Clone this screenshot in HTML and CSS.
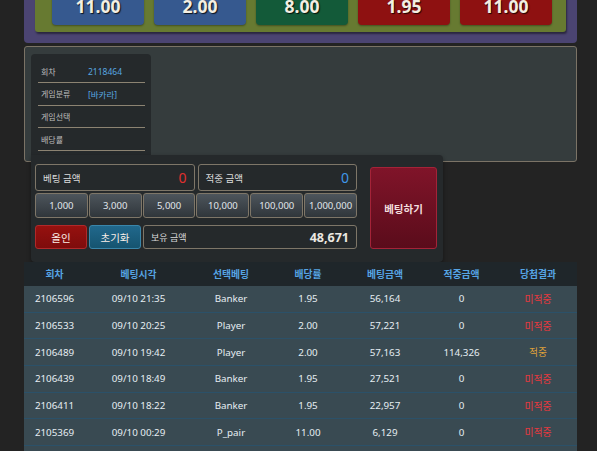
FILE: index.html
```html
<!DOCTYPE html>
<html lang="ko">
<head>
    <meta charset="UTF-8">
    <meta name="viewport" content="width=device-width, initial-scale=1.0">
    <title>바카라 베팅</title>
    <link rel="stylesheet" href="styles.css">
</head>
<body>
    <div class="page">
        <div class="odds-bar">
            <div class="odds-inner">
                <div class="odd blue">11.00</div>
                <div class="odd blue">2.00</div>
                <div class="odd green">8.00</div>
                <div class="odd red">1.95</div>
                <div class="odd red">11.00</div>
            </div>
        </div>

        <div class="game-panel">
            <div class="info-card">
                <div class="info-row"><span class="label">회차</span><span class="value">2118464</span></div>
                <div class="info-row"><span class="label">게임분류</span><span class="value">[바카라]</span></div>
                <div class="info-row"><span class="label">게임선택</span><span class="value"></span></div>
                <div class="info-row"><span class="label">배당률</span><span class="value"></span></div>
            </div>
        </div>

        <div class="bet-panel">
            <div class="bet-left">
                <div class="amount-row">
                    <div class="field"><span>베팅 금액</span><b class="num red-text">0</b></div>
                    <div class="field"><span>적중 금액</span><b class="num blue-text">0</b></div>
                </div>
                <div class="chips">
                    <button class="chip">1,000</button>
                    <button class="chip">3,000</button>
                    <button class="chip">5,000</button>
                    <button class="chip">10,000</button>
                    <button class="chip">100,000</button>
                    <button class="chip">1,000,000</button>
                </div>
                <div class="action-row">
                    <button class="btn allin">올인</button>
                    <button class="btn reset">초기화</button>
                    <div class="field balance"><span>보유 금액</span><b class="num">48,671</b></div>
                </div>
            </div>
            <button class="bet-btn">베팅하기</button>
        </div>

        <div class="history">
            <div class="history-row head">
                <div>회차</div><div>베팅시각</div><div>선택베팅</div><div>배당률</div><div>베팅금액</div><div>적중금액</div><div>당첨결과</div>
            </div>
            <div class="history-row">
                <div>2106596</div><div>09/10 21:35</div><div>Banker</div><div>1.95</div><div>56,164</div><div>0</div><div class="lose">미적중</div>
            </div>
            <div class="history-row">
                <div>2106533</div><div>09/10 20:25</div><div>Player</div><div>2.00</div><div>57,221</div><div>0</div><div class="lose">미적중</div>
            </div>
            <div class="history-row">
                <div>2106489</div><div>09/10 19:42</div><div>Player</div><div>2.00</div><div>57,163</div><div>114,326</div><div class="win">적중</div>
            </div>
            <div class="history-row">
                <div>2106439</div><div>09/10 18:49</div><div>Banker</div><div>1.95</div><div>27,521</div><div>0</div><div class="lose">미적중</div>
            </div>
            <div class="history-row">
                <div>2106411</div><div>09/10 18:22</div><div>Banker</div><div>1.95</div><div>22,957</div><div>0</div><div class="lose">미적중</div>
            </div>
            <div class="history-row">
                <div>2105369</div><div>09/10 00:29</div><div>P_pair</div><div>11.00</div><div>6,129</div><div>0</div><div class="lose">미적중</div>
            </div>
            <div class="history-row">
                <div>2105301</div><div>09/09 23:12</div><div>Banker</div><div>1.95</div><div>5,000</div><div>0</div><div class="lose">미적중</div>
            </div>
        </div>
    </div>
</body>
</html>
```

FILE: styles.css
```css
* {
    margin: 0;
    padding: 0;
    box-sizing: border-box;
    font-family: "Noto Sans", "Noto Sans CJK KR", sans-serif;
}

body {
    background-color: #232323;
    color: #e2e8ec;
    overflow: hidden;
}

.page {
    padding: 0 20px 0 24px;
}

/* 배당 버튼 영역 */
.odds-bar {
    margin-top: -20px;
    background: #4b4472;
    padding: 0 11px 11px 11px;
    border-radius: 0 0 4px 4px;
}

.odds-inner {
    display: flex;
    gap: 10px;
    background: #677a31;
    padding: 7px 14px 7px 17px;
    border-radius: 0 0 3px 3px;
    box-shadow: 1px 2px 2px rgba(0, 0, 0, 0.45);
}

.odd {
    width: 92px;
    height: 38px;
    line-height: 38px;
    text-align: center;
    font-size: 17.5px;
    font-weight: 700;
    color: #f3efe2;
    text-shadow: 1px 1px 1px rgba(0, 0, 0, 0.8);
    border-radius: 4px;
    box-shadow: 0 1px 2px rgba(0, 0, 0, 0.35);
}

.odd.blue { background: #36598f; }
.odd.green { background: #135a39; }
.odd.red { background: #8e1111; }

/* 게임 정보 */
.game-panel {
    margin-top: 3px;
    height: 116px;
    background: #353c3d;
    border: 1px solid #7b7366;
    border-radius: 3px;
    padding: 7px 6px;
}

.info-card {
    width: 120px;
    background: #25292b;
    border-radius: 4px 4px 0 0;
    padding: 6.5px 6px 4px 7px;
}

.info-row {
    display: flex;
    align-items: center;
    height: 22.67px;
    border-bottom: 1px solid #8c8372;
    padding-left: 3px;
    font-size: 8px;
}

.info-row .label {
    width: 47px;
    color: #bdbdbd;
}

.info-row .value {
    color: #57a7e0;
    font-size: 8.5px;
}

/* 베팅 패널 */
.bet-panel {
    display: flex;
    align-items: flex-start;
    width: 412px;
    margin: -7px 0 0 7px;
    padding: 9px 6px 13px 4px;
    background: #25292b;
    border-radius: 0 4px 4px 4px;
    box-shadow: 0 2px 4px rgba(0, 0, 0, 0.4);
}

.bet-left {
    width: 322px;
}

.amount-row {
    display: grid;
    grid-template-columns: 1fr 1fr;
    gap: 3px;
    height: 27px;
}

.field {
    display: flex;
    align-items: center;
    justify-content: space-between;
    border: 1px solid #7e7668;
    border-radius: 3px;
    padding: 0 7px 0 7px;
    font-size: 9.5px;
    color: #dcdcdc;
}

.field .num {
    font-size: 14px;
    font-weight: 400;
}

.red-text { color: #e0302e; }
.blue-text { color: #3f97e8; }

.chips {
    display: grid;
    grid-template-columns: repeat(6, 1fr);
    gap: 1px;
    height: 25px;
    margin-top: 2px;
}

.chip {
    background: linear-gradient(#4d555c, #30363b);
    border: 1px solid #7e7668;
    border-radius: 3px;
    color: #e1e7ec;
    font-size: 9.5px;
}

.action-row {
    display: grid;
    grid-template-columns: 52px 52px 1fr;
    gap: 2px;
    height: 24px;
    margin-top: 7px;
}

.btn {
    border-radius: 3px;
    color: #fbefe8;
    font-size: 10.5px;
}

.btn.allin {
    background: linear-gradient(#96110f, #7e0c0c);
    border: 1px solid #b0292a;
}

.btn.reset {
    background: linear-gradient(#21688c, #165470);
    border: 1px solid #3a86aa;
}

.balance span {
    font-size: 9px;
}

.balance .num {
    font-size: 12.5px;
    font-weight: 700;
    color: #ece8e2;
}

.bet-btn {
    width: 67px;
    height: 82px;
    margin: 3px 0 0 13px;
    background: linear-gradient(#801429, #5a0c1b);
    border: 1px solid #a42338;
    border-radius: 3px;
    color: #f3dede;
    font-size: 10.5px;
    font-weight: 700;
}

/* 베팅 내역 */
.history {
    font-size: 9.8px;
}

.history-row {
    display: grid;
    grid-template-columns: 61px 107px 78px 76px 78px 75px 78px;
    align-items: center;
    height: 26.7px;
    background: #394a52;
    border-bottom: 1px solid #2b5169;
    text-align: center;
    color: #e6eef2;
}

.history-row.head {
    height: 24px;
    background: #1f262a;
    border-bottom: none;
    color: #56a4e4;
    font-weight: 700;
}

.lose { color: #e8383e; }
.win { color: #dea03a; }
```
